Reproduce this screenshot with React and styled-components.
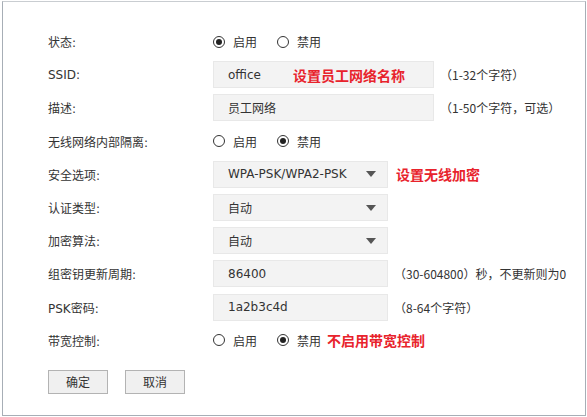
import React from "react";
import styled, { createGlobalStyle } from "styled-components";

const Global = createGlobalStyle`
  html, body { margin: 0; padding: 0; background: #fff; }
  body {
    font-family: "DejaVu Sans", "Noto Sans CJK SC", sans-serif;
    font-size: 12px;
    color: #333;
  }
`;

const Frame = styled.div`
  box-sizing: border-box;
  margin: 1px 1px 0 2px;
  width: 584px;
  height: 415px;
  border: 1px solid #a7aeb6;
  border-top-color: #c9cdd1;
  background: #fff;
  padding: 23px 0 0 45px;
`;

const Row = styled.div`
  display: grid;
  grid-template-columns: 165px auto;
  align-items: center;
  height: 33.2px;
`;

const Label = styled.div`
  white-space: nowrap;
`;

const Control = styled.div`
  display: flex;
  align-items: center;
  position: relative;
  white-space: nowrap;
`;

const Field = styled.div`
  box-sizing: border-box;
  position: relative;
  display: flex;
  align-items: center;
  width: ${(p) => p.$w}px;
  height: 27px;
  padding: 0 11px 0 14px;
  background: #f3f3f3;
  border: 1px solid #e8e8e8;
  color: #333;
`;

const Value = styled.span`
  flex: 1;
`;

const Arrow = styled.span`
  width: 0;
  height: 0;
  border-left: 5px solid transparent;
  border-right: 5px solid transparent;
  border-top: 6px solid #555;
`;

const Hint = styled.span`
  margin-left: 6px;
  font-family: "Noto Sans CJK SC", "DejaVu Sans", sans-serif;
  font-size: 12px;
  color: #333;
`;

const Note = styled.span`
  color: #e8232c;
  font-family: "Noto Sans CJK SC", sans-serif;
  font-weight: 700;
  font-size: 14px;
  margin-left: ${(p) => p.$ml || 8}px;
`;

const Overlay = styled(Note)`
  position: absolute;
  left: 79px;
  margin-left: 0;
`;

const RadioItem = styled.label`
  display: inline-flex;
  align-items: center;
  margin-right: ${(p) => (p.$last ? 0 : 20)}px;
`;

const Circle = styled.span`
  box-sizing: border-box;
  width: 12px;
  height: 12px;
  border-radius: 50%;
  border: 1px solid #333;
  display: inline-flex;
  align-items: center;
  justify-content: center;
  margin-right: 8px;
  &::after {
    content: "";
    width: 6px;
    height: 6px;
    border-radius: 50%;
    background: ${(p) => (p.$on ? "#222" : "transparent")};
  }
`;

const Buttons = styled.div`
  display: flex;
  gap: 17px;
  margin-top: 13px;
`;

const Button = styled.button`
  box-sizing: border-box;
  width: 60px;
  height: 24px;
  background: #f0f0f0;
  border: 1px solid #b3b3b3;
  font-family: "Noto Sans CJK SC", sans-serif;
  font-size: 12px;
  color: #333;
  padding: 0;
`;

function Radios({ on }) {
  return (
    <>
      <RadioItem>
        <Circle $on={on === 0} />
        启用
      </RadioItem>
      <RadioItem $last>
        <Circle $on={on === 1} />
        禁用
      </RadioItem>
    </>
  );
}

export default function App() {
  return (
    <>
      <Global />
      <Frame>
        <Row>
          <Label>状态:</Label>
          <Control>
            <Radios on={0} />
          </Control>
        </Row>
        <Row>
          <Label>SSID:</Label>
          <Control>
            <Field $w={221}>
              <Value>office</Value>
              <Overlay>设置员工网络名称</Overlay>
            </Field>
            <Hint>（1-32个字符）</Hint>
          </Control>
        </Row>
        <Row>
          <Label>描述:</Label>
          <Control>
            <Field $w={221}>
              <Value>员工网络</Value>
            </Field>
            <Hint>（1-50个字符，可选）</Hint>
          </Control>
        </Row>
        <Row>
          <Label>无线网络内部隔离:</Label>
          <Control>
            <Radios on={1} />
          </Control>
        </Row>
        <Row>
          <Label>安全选项:</Label>
          <Control>
            <Field $w={175}>
              <Value>WPA-PSK/WPA2-PSK</Value>
              <Arrow />
            </Field>
            <Note>设置无线加密</Note>
          </Control>
        </Row>
        <Row>
          <Label>认证类型:</Label>
          <Control>
            <Field $w={175}>
              <Value>自动</Value>
              <Arrow />
            </Field>
          </Control>
        </Row>
        <Row>
          <Label>加密算法:</Label>
          <Control>
            <Field $w={175}>
              <Value>自动</Value>
              <Arrow />
            </Field>
          </Control>
        </Row>
        <Row>
          <Label>组密钥更新周期:</Label>
          <Control>
            <Field $w={175}>
              <Value>86400</Value>
            </Field>
            <Hint>（30-604800）秒，不更新则为0</Hint>
          </Control>
        </Row>
        <Row>
          <Label>PSK密码:</Label>
          <Control>
            <Field $w={175}>
              <Value>1a2b3c4d</Value>
            </Field>
            <Hint>（8-64个字符）</Hint>
          </Control>
        </Row>
        <Row>
          <Label>带宽控制:</Label>
          <Control>
            <Radios on={1} />
            <Note $ml={6}>不启用带宽控制</Note>
          </Control>
        </Row>
        <Buttons>
          <Button>确定</Button>
          <Button>取消</Button>
        </Buttons>
      </Frame>
    </>
  );
}
